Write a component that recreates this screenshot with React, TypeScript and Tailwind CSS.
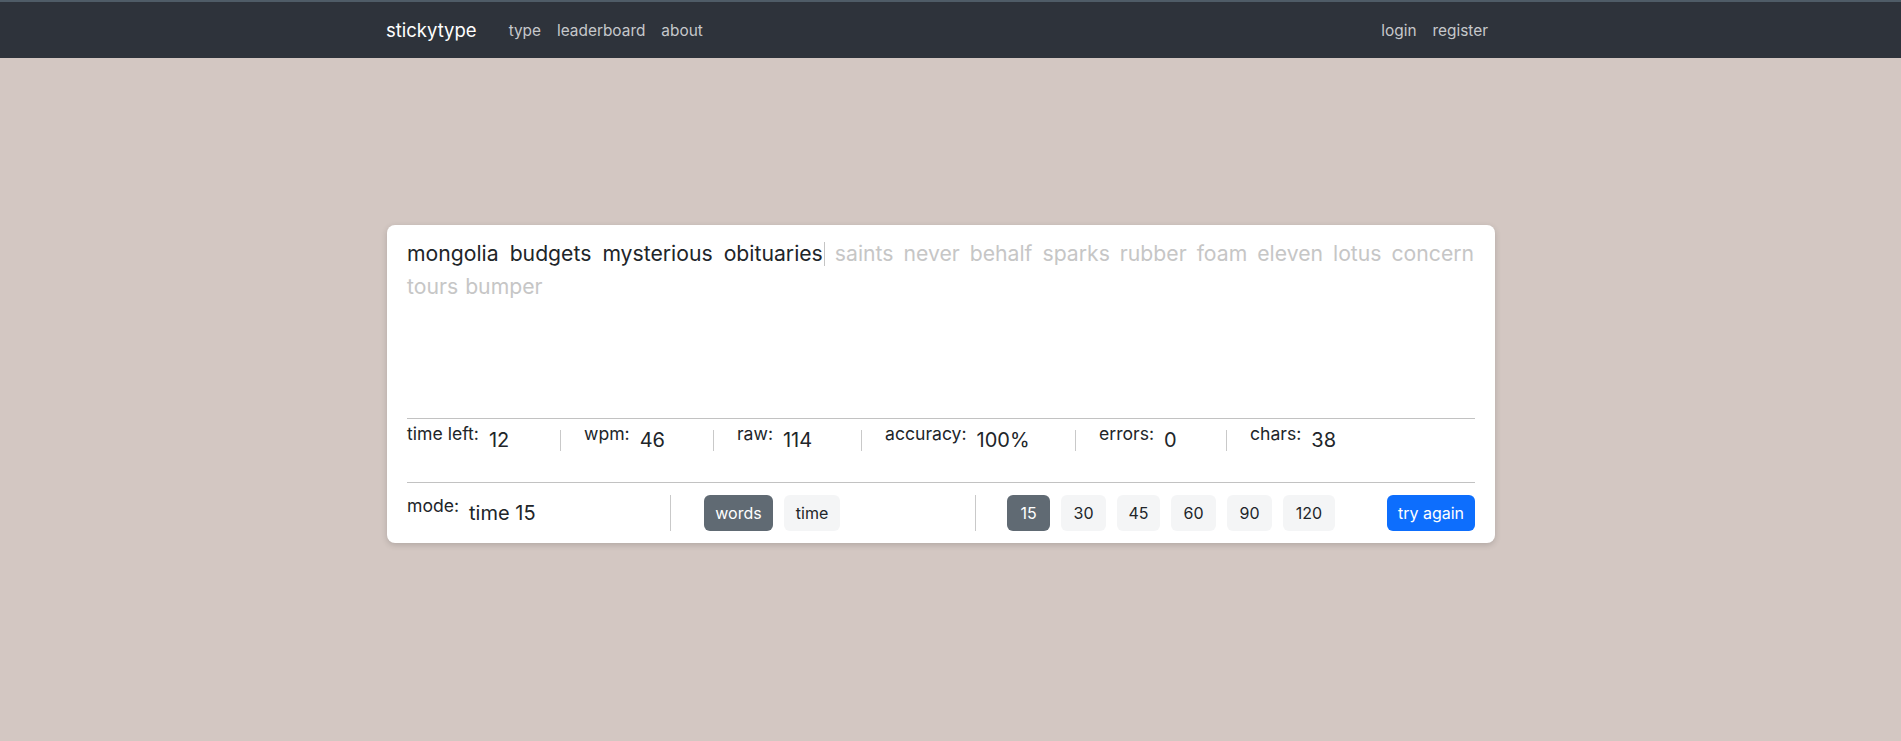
import React from "react";

const typed = ["mongolia", "budgets", "mysterious", "obituaries"];
const line1Rest = ["saints", "never", "behalf", "sparks", "rubber", "foam", "eleven", "lotus", "concern"];
const line2 = ["tours", "bumper"];

const stats = [
  { label: "time left:", value: "12", cls: "w-[153px]" },
  { label: "wpm:", value: "46", cls: "w-[153px] pl-[23px] border-l border-[#c9c9c9]" },
  { label: "raw:", value: "114", cls: "w-[148px] pl-[23px] border-l border-[#c9c9c9]" },
  { label: "accuracy:", value: "100%", cls: "w-[214px] pl-[23px] border-l border-[#c9c9c9]" },
  { label: "errors:", value: "0", cls: "w-[151px] pl-[23px] border-l border-[#c9c9c9]" },
  { label: "chars:", value: "38", cls: "pl-[23px] border-l border-[#c9c9c9]" },
];

const times = [
  { t: "15", cls: "w-[43px] bg-[#606a73] text-white" },
  { t: "30", cls: "w-[45px] bg-[#f4f5f6] text-[#212529]" },
  { t: "45", cls: "w-[43px] bg-[#f4f5f6] text-[#212529]" },
  { t: "60", cls: "w-[45px] bg-[#f4f5f6] text-[#212529]" },
  { t: "90", cls: "w-[45px] bg-[#f4f5f6] text-[#212529]" },
  { t: "120", cls: "w-[52px] bg-[#f4f5f6] text-[#212529]" },
];

export default function App() {
  return (
    <div className="min-h-screen bg-[#d3c7c2] font-[Inter,'Liberation_Sans',sans-serif] text-[#212529]">
      <nav className="h-[58px] border-t-2 border-[#4f5c67] bg-[#2e333b] pr-[19px] pt-[2px]">
        <div className="mx-auto flex h-full w-[1110px] items-center">
          <span className="text-[18.5px] text-white">stickytype</span>
          <div className="ml-[32px] flex gap-[16px] text-[15.4px] text-[#c6c8cb]">
            <span>type</span>
            <span>leaderboard</span>
            <span>about</span>
          </div>
          <div className="ml-auto mr-[8px] flex gap-[16px] text-[15.4px] text-[#c6c8cb]">
            <span>login</span>
            <span>register</span>
          </div>
        </div>
      </nav>

      <div className="pr-[19px] pt-[167px]">
        <div className="mx-auto w-[1108px] rounded-lg bg-white px-[20px] pt-[12px] shadow-[0_2px_6px_rgba(0,0,0,0.16)]">
          <div className="h-[181px] text-[21.2px]">
            <div className="flex h-[33px] items-center">
              {typed.map((w, i) => (
                <span key={w} className={i < typed.length - 1 ? "mr-[11px] text-[#212529]" : "text-[#212529]"}>
                  {w}
                </span>
              ))}
              <span className="ml-px h-[24px] w-px bg-[#c4c4c4]" />
              {line1Rest.map((w) => (
                <span key={w} className="ml-[10px] text-[#c6c6c6]">
                  {w}
                </span>
              ))}
            </div>
            <div className="flex h-[33px] items-center gap-[7px] text-[#c6c6c6]">
              {line2.map((w) => (
                <span key={w}>{w}</span>
              ))}
            </div>
          </div>

          <div className="flex h-[64px] items-start border-t border-[#c2c2c2] pt-[11px]">
            {stats.map((s) => (
              <div key={s.label} className={`flex h-[21px] items-center ${s.cls}`}>
                <span className="mb-[14px] text-[17.6px] leading-[20px]">{s.label}</span>
                <span className="ml-[10px] text-[20px] leading-[21px]">{s.value}</span>
              </div>
            ))}
          </div>

          <div className="flex h-[61px] items-center border-t border-[#c2c2c2]">
            <div className="flex w-[263px] items-center">
              <span className="mb-[14px] text-[17.6px] leading-[20px]">mode:</span>
              <span className="ml-[10px] text-[20px] leading-[21px]">time 15</span>
            </div>
            <div className="flex w-[305px] items-center gap-[11px] border-l border-[#c9c9c9] pl-[33px]">
              <button className="h-[36px] w-[69px] rounded-[6px] bg-[#606a73] text-[16px] text-white">words</button>
              <button className="h-[36px] w-[56px] rounded-[6px] bg-[#f4f5f6] text-[16px] text-[#212529]">time</button>
            </div>
            <div className="flex items-center gap-[11px] border-l border-[#c9c9c9] pl-[31px]">
              {times.map((b) => (
                <button key={b.t} className={`h-[36px] rounded-[6px] text-[16px] ${b.cls}`}>
                  {b.t}
                </button>
              ))}
            </div>
            <button className="ml-auto h-[36px] w-[88px] rounded-[6px] bg-[#0d6efd] text-[16px] text-white">try again</button>
          </div>
        </div>
      </div>
    </div>
  );
}
